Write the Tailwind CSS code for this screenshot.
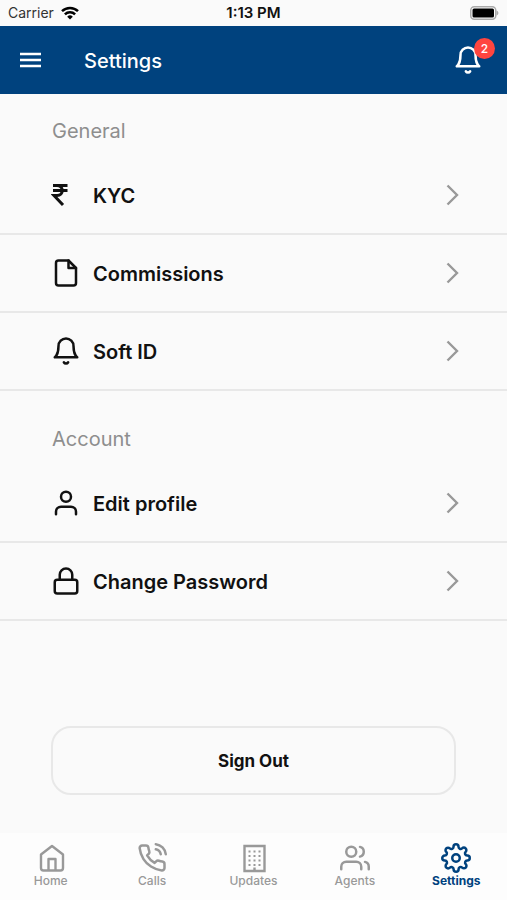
<!DOCTYPE html>
<html lang="en">
<head>
  <meta charset="UTF-8" />
  <meta name="viewport" content="width=device-width, initial-scale=1" />
  <title>Settings</title>
  <script src="https://cdn.jsdelivr.net/npm/@tailwindcss/browser@4"></script>
</head>
<body class="bg-[#fafafa] min-h-screen flex flex-col font-['Inter',sans-serif] text-[#111]">

  <!-- status bar -->
  <div class="h-[26px] px-2 grid grid-cols-3 items-center text-sm">
    <div class="flex items-center gap-[6px] text-[#333]">
      <span>Carrier</span>
      <svg class="w-[20px] h-[14px]" viewBox="0 0 18 14" fill="none" stroke="#000" stroke-width="2.5">
        <path d="M1 5.2a11.5 11.5 0 0 1 16 0" />
        <path d="M3.9 8.3a7.2 7.2 0 0 1 10.2 0" />
        <path d="M9 13.6l-2.8-2.9a4 4 0 0 1 5.6 0z" fill="#000" stroke="none" />
      </svg>
    </div>
    <div class="text-center text-[15px] font-semibold">1:13 PM</div>
    <div class="flex justify-end">
      <svg class="w-[30px] h-[14px]" viewBox="0 0 30 14">
        <rect x="1.75" y="0.75" width="25" height="12.5" rx="3.5" fill="#fff" stroke="#aaa" stroke-width="1.5" />
        <rect x="3.5" y="2.5" width="21.5" height="9" rx="1.5" fill="#000" />
        <path d="M27.5 4.5c2.5 1 2.5 4 0 5z" fill="#aaa" />
      </svg>
    </div>
  </div>

  <header class="h-[68px] px-5 flex items-center bg-[#00427e] text-white">
    <button type="button" aria-label="Menu">
      <svg class="w-[21px] h-[16px]" viewBox="0 0 21 16" stroke="currentColor" stroke-width="2.4">
        <path d="M0 2h21M0 8h21M0 14h21" />
      </svg>
    </button>
    <h1 class="ml-[43px] pt-0.5 text-xl font-medium">Settings</h1>
    <button type="button" aria-label="Notifications" class="relative ml-auto mr-1">
      <svg class="w-[30px] h-[30px]" viewBox="0 0 24 24" fill="none" stroke="currentColor" stroke-width="2" stroke-linecap="round" stroke-linejoin="round">
        <path d="M18 8A6 6 0 0 0 6 8c0 7-3 9-3 9h18s-3-2-3-9" />
        <path d="M13.73 21a2 2 0 0 1-3.46 0" />
      </svg>
      <span class="absolute -top-[7px] -right-[12px] size-[21px] rounded-full bg-[#ff453f] text-xs font-medium leading-[21px] text-center">2</span>
    </button>
  </header>

  <main class="flex flex-col">
    <section>
      <h2 class="px-[52px] pt-[23px] pb-3 text-xl leading-7 text-[#8e8e8e]">General</h2>
      <ul>
        <li class="border-b-2 border-[#e8e8e8]">
          <a href="#" class="h-[76px] pl-[51px] pr-12 flex items-center gap-3 text-xl font-semibold">
            <svg class="w-[30px] h-[30px]" viewBox="0 0 30 30" fill="none" stroke="currentColor" stroke-width="3">
              <path d="M2 5.5h14.5M2 10.6h14.5" />
              <path d="M2 5.5h4c7 0 7 10 0 10H3L12 25" />
            </svg>
            <span class="flex-1 pt-0.5">KYC</span>
            <svg class="w-[13px] h-[22px]" viewBox="0 0 13 22" fill="none" stroke="#999" stroke-width="2.4"><path d="M1.5 1.5L11 11l-9.5 9.5" /></svg>
          </a>
        </li>
        <li class="border-b-2 border-[#e8e8e8]">
          <a href="#" class="h-[76px] pl-[51px] pr-12 flex items-center gap-3 text-xl font-semibold">
            <svg class="w-[30px] h-[30px]" viewBox="0 0 24 24" fill="none" stroke="currentColor" stroke-width="2" stroke-linecap="round" stroke-linejoin="round">
              <path d="M14 2H6a2 2 0 0 0-2 2v16a2 2 0 0 0 2 2h12a2 2 0 0 0 2-2V8z" />
              <path d="M14 2v6h6" />
            </svg>
            <span class="flex-1 pt-0.5">Commissions</span>
            <svg class="w-[13px] h-[22px]" viewBox="0 0 13 22" fill="none" stroke="#999" stroke-width="2.4"><path d="M1.5 1.5L11 11l-9.5 9.5" /></svg>
          </a>
        </li>
        <li class="border-b-2 border-[#e8e8e8]">
          <a href="#" class="h-[76px] pl-[51px] pr-12 flex items-center gap-3 text-xl font-semibold">
            <svg class="w-[30px] h-[30px]" viewBox="0 0 24 24" fill="none" stroke="currentColor" stroke-width="2" stroke-linecap="round" stroke-linejoin="round">
              <path d="M18 8A6 6 0 0 0 6 8c0 7-3 9-3 9h18s-3-2-3-9" />
              <path d="M13.73 21a2 2 0 0 1-3.46 0" />
            </svg>
            <span class="flex-1 pt-0.5">Soft ID</span>
            <svg class="w-[13px] h-[22px]" viewBox="0 0 13 22" fill="none" stroke="#999" stroke-width="2.4"><path d="M1.5 1.5L11 11l-9.5 9.5" /></svg>
          </a>
        </li>
      </ul>
    </section>

    <section>
      <h2 class="px-[52px] pt-[34px] pb-3 text-xl leading-7 text-[#8e8e8e]">Account</h2>
      <ul>
        <li class="border-b-2 border-[#e8e8e8]">
          <a href="#" class="h-[76px] pl-[51px] pr-12 flex items-center gap-3 text-xl font-semibold">
            <svg class="w-[30px] h-[30px]" viewBox="0 0 24 24" fill="none" stroke="currentColor" stroke-width="2" stroke-linecap="round" stroke-linejoin="round">
              <path d="M20 21v-2a4 4 0 0 0-4-4H8a4 4 0 0 0-4 4v2" />
              <circle cx="12" cy="7" r="4" />
            </svg>
            <span class="flex-1 pt-0.5">Edit profile</span>
            <svg class="w-[13px] h-[22px]" viewBox="0 0 13 22" fill="none" stroke="#999" stroke-width="2.4"><path d="M1.5 1.5L11 11l-9.5 9.5" /></svg>
          </a>
        </li>
        <li class="border-b-2 border-[#e8e8e8]">
          <a href="#" class="h-[76px] pl-[51px] pr-12 flex items-center gap-3 text-xl font-semibold">
            <svg class="w-[30px] h-[30px]" viewBox="0 0 24 24" fill="none" stroke="currentColor" stroke-width="2" stroke-linecap="round" stroke-linejoin="round">
              <rect x="3" y="11" width="18" height="11" rx="2" />
              <path d="M7 11V7a5 5 0 0 1 10 0v4" />
            </svg>
            <span class="flex-1 pt-0.5">Change Password</span>
            <svg class="w-[13px] h-[22px]" viewBox="0 0 13 22" fill="none" stroke="#999" stroke-width="2.4"><path d="M1.5 1.5L11 11l-9.5 9.5" /></svg>
          </a>
        </li>
      </ul>
    </section>

    <button type="button" class="mt-[105px] mx-[51px] h-[69px] pt-0.5 rounded-[20px] border-2 border-[#e8e8e8] text-[17px] font-bold">Sign Out</button>
  </main>

  <!-- tab bar -->
  <nav class="mt-auto h-[67px] pt-[10px] grid grid-cols-5 bg-[#fdfdfd] text-xs font-medium text-[#999]">
    <a href="#" class="flex flex-col items-center">
      <svg class="w-[30px] h-[30px]" viewBox="0 0 30 30" fill="none" stroke="currentColor" stroke-width="2.4" stroke-linejoin="round">
        <path d="M5 11.5L16 3l11 8.5V25a2.5 2.5 0 0 1-2.5 2.5h-17A2.5 2.5 0 0 1 5 25z" />
        <path d="M12.500 27.500V16h7v11.500" />
      </svg>
      <span>Home</span>
    </a>
    <a href="#" class="flex flex-col items-center">
      <svg class="w-[30px] h-[30px]" viewBox="0 0 24 24" fill="none" stroke="currentColor" stroke-width="2" stroke-linecap="round" stroke-linejoin="round">
        <path d="M15.05 5A5 5 0 0 1 19 8.95M15.05 1A9 9 0 0 1 23 8.94" />
        <path d="M22 16.92v3a2 2 0 0 1-2.18 2 19.79 19.79 0 0 1-8.63-3.07 19.5 19.5 0 0 1-6-6A19.79 19.79 0 0 1 2.12 4.18 2 2 0 0 1 4.11 2h3a2 2 0 0 1 2 1.72c.127.96.361 1.903.7 2.81a2 2 0 0 1-.45 2.11L8.09 9.91a16 16 0 0 0 6 6l1.27-1.27a2 2 0 0 1 2.11-.45c.907.339 1.85.573 2.81.7A2 2 0 0 1 22 16.92z" />
      </svg>
      <span>Calls</span>
    </a>
    <a href="#" class="flex flex-col items-center">
      <svg class="w-[30px] h-[30px]" viewBox="0 0 30 30" fill="none" stroke="currentColor">
        <path d="M6.5 3h20v25h-20z" stroke-width="2.4" />
        <path d="M11.5 7.5v16M16.5 7.5v16M21.5 7.5v16" stroke-width="2" stroke-dasharray="2 2.5" />
        <path d="M16.5 24.5V28" stroke-width="2.4" />
      </svg>
      <span>Updates</span>
    </a>
    <a href="#" class="flex flex-col items-center">
      <svg class="w-[30px] h-[30px]" viewBox="0 0 24 24" fill="none" stroke="currentColor" stroke-width="2" stroke-linecap="round" stroke-linejoin="round">
        <path d="M17 21v-2a4 4 0 0 0-4-4H5a4 4 0 0 0-4 4v2" />
        <circle cx="9" cy="7" r="4" />
        <path d="M23 21v-2a4 4 0 0 0-3-3.87M16 3.13a4 4 0 0 1 0 7.75" />
      </svg>
      <span>Agents</span>
    </a>
    <a href="#" aria-current="page" class="flex flex-col items-center font-bold text-[#00427e]">
      <svg class="w-[30px] h-[30px]" viewBox="0 0 24 24" fill="none" stroke="currentColor" stroke-width="2" stroke-linecap="round" stroke-linejoin="round">
        <circle cx="12" cy="12" r="3" />
        <path d="M19.4 15a1.65 1.65 0 0 0 .33 1.82l.06.06a2 2 0 0 1 0 2.83 2 2 0 0 1-2.83 0l-.06-.06a1.65 1.65 0 0 0-1.82-.33 1.65 1.65 0 0 0-1 1.51V21a2 2 0 0 1-2 2 2 2 0 0 1-2-2v-.09A1.65 1.65 0 0 0 9 19.4a1.65 1.65 0 0 0-1.82.33l-.06.06a2 2 0 0 1-2.83 0 2 2 0 0 1 0-2.83l.06-.06a1.65 1.65 0 0 0 .33-1.82 1.65 1.65 0 0 0-1.51-1H3a2 2 0 0 1-2-2 2 2 0 0 1 2-2h.09A1.65 1.65 0 0 0 4.6 9a1.65 1.65 0 0 0-.33-1.82l-.06-.06a2 2 0 0 1 0-2.83 2 2 0 0 1 2.83 0l.06.06a1.65 1.65 0 0 0 1.82.33H9a1.65 1.65 0 0 0 1-1.51V3a2 2 0 0 1 2-2 2 2 0 0 1 2 2v.09a1.65 1.65 0 0 0 1 1.51 1.65 1.65 0 0 0 1.82-.33l.06-.06a2 2 0 0 1 2.83 0 2 2 0 0 1 0 2.83l-.06.06a1.65 1.65 0 0 0-.33 1.82V9a1.65 1.65 0 0 0 1.51 1H21a2 2 0 0 1 2 2 2 2 0 0 1-2 2h-.09a1.65 1.65 0 0 0-1.51 1z" />
      </svg>
      <span>Settings</span>
    </a>
  </nav>

</body>
</html>
